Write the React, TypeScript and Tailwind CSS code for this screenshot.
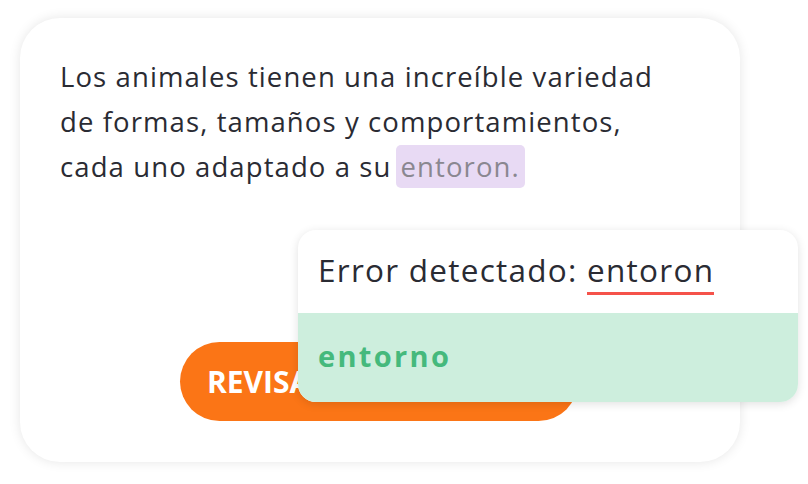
export default function App() {
  return (
    <div className="w-[808px] h-[484px] bg-white pt-[18px] pl-[20px] font-['Open_Sans',sans-serif]">
      <div className="relative w-[720px] h-[444px] rounded-[40px] bg-white shadow-[0_0_12px_rgba(0,0,0,0.10)] pt-[36px] pl-[40px]">
        <p className="text-[27.5px] leading-[45px] tracking-[0.04em] text-[#2a2b33]">
          Los animales tienen una increíble variedad
          <br />
          de formas, tamaños y comportamientos,
          <br />
          cada uno adaptado a su
          <span className="ml-[4px] rounded-[5px] bg-[#e8daf4] px-[5px] py-[3px] text-[#8a8790]">entoron.</span>
        </p>

        <button className="mt-[153px] ml-[120px] h-[79px] w-[398px] rounded-full bg-[#fb7516] pl-[27px] text-left text-[30px] font-bold text-white">
          REVISAR TEXTO
        </button>

        <div className="absolute left-[278px] top-[212px] w-[500px] overflow-hidden rounded-[18px] bg-white shadow-[0_2px_10px_rgba(0,0,0,0.12)]">
          <div className="h-[83px] pl-[20px] pt-[20px] text-[31.5px] leading-[40px] tracking-[0.04em] text-[#2a2b33]">
            Error detectado:{' '}
            <span className="border-b-[3px] border-[#f5524a] pb-[1px]">entoron</span>
          </div>
          <div className="h-[89px] bg-[#cdeedd] pl-[20px] pt-[23px] text-[29px] font-bold leading-[40px] tracking-[0.08em] text-[#45b97c]">
            entorno
          </div>
        </div>
      </div>
    </div>
  );
}
